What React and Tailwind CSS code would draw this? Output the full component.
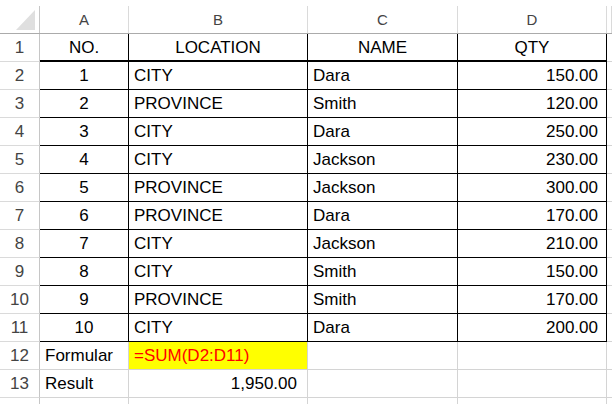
const grid = "grid grid-cols-[40px_89px_179px_150px_149px_5px]";

const data = [
  ["1", "CITY", "Dara", "150.00"],
  ["2", "PROVINCE", "Smith", "120.00"],
  ["3", "CITY", "Dara", "250.00"],
  ["4", "CITY", "Jackson", "230.00"],
  ["5", "PROVINCE", "Jackson", "300.00"],
  ["6", "PROVINCE", "Dara", "170.00"],
  ["7", "CITY", "Jackson", "210.00"],
  ["8", "CITY", "Smith", "150.00"],
  ["9", "PROVINCE", "Smith", "170.00"],
  ["10", "CITY", "Dara", "200.00"],
];

// each row: [A, B, C, D] with alignment per cell
const sheet = [
  [
    { v: "NO.", a: "center" },
    { v: "LOCATION", a: "center" },
    { v: "NAME", a: "center" },
    { v: "QTY", a: "center" },
  ],
  ...data.map(([no, loc, name, qty]) => [
    { v: no, a: "center" },
    { v: loc, a: "left" },
    { v: name, a: "left" },
    { v: qty, a: "right" },
  ]),
  [
    { v: "Formular", a: "left" },
    { v: "=SUM(D2:D11)", a: "left", fill: true },
    { v: "", a: "left" },
    { v: "", a: "left" },
  ],
  [
    { v: "Result", a: "left" },
    { v: "1,950.00", a: "right", wide: true },
    { v: "", a: "left" },
    { v: "", a: "left" },
  ],
  [
    { v: "", a: "left" },
    { v: "", a: "left" },
    { v: "", a: "left" },
    { v: "", a: "left" },
  ],
];

function alignClass(cell) {
  if (cell.a === "center") return "justify-center";
  if (cell.a === "right") return cell.wide ? "justify-end pr-[10px]" : "justify-end pr-[8px]";
  return "justify-start pl-[5px]";
}

function ColumnHeader() {
  return (
    <div className={`${grid} h-[34px]`}>
      <div className="border-b border-[#ababab] pt-[6px]">
        <div className="flex h-full items-end justify-end border-r border-[#c6c6c6] pb-[3px] pr-[4px]">
          <svg width="19" height="20" viewBox="0 0 19 20">
            <polygon points="19,0 19,20 0,20" fill="#dfdfdf" />
          </svg>
        </div>
      </div>
      {["A", "B", "C", "D", ""].map((letter, i) => (
        <div key={i} className="border-b border-[#ababab] pt-[6px]">
          <div className="flex h-full items-center justify-center border-r border-[#dadada] pb-[1px] text-[15px] text-[#444]">
            {letter}
          </div>
        </div>
      ))}
    </div>
  );
}

function SheetRow({ index, cells }) {
  const inTable = index <= 11;
  // the last row is only a sliver at the bottom edge, its number falls outside
  const label = index <= 13 ? index : "";

  return (
    <div className={`${grid} h-[28px]`}>
      <div className="flex items-center justify-center border-b border-r border-[#dadada] border-r-[#c6c6c6] text-[17px] text-[#444]">
        {label}
      </div>
      {cells.map((cell, i) => (
        <div
          key={i}
          className={[
            "flex items-center overflow-hidden whitespace-nowrap border-r",
            inTable ? "border-black" : "border-[#d4d4d4]",
            index === 1 ? "border-b-2" : "border-b",
            cell.fill ? "bg-[#ffff00] text-[#ff0000]" : "text-black",
            alignClass(cell),
          ].join(" ")}
        >
          {cell.v}
        </div>
      ))}
      <div className="border-b border-[#d4d4d4]" />
    </div>
  );
}

export default function App() {
  return (
    <div className="h-[404px] w-[612px] overflow-hidden bg-white font-['Liberation_Sans',Arial,sans-serif] text-[17px] leading-none">
      <ColumnHeader />
      {sheet.map((cells, i) => (
        <SheetRow key={i} index={i + 1} cells={cells} />
      ))}
    </div>
  );
}
